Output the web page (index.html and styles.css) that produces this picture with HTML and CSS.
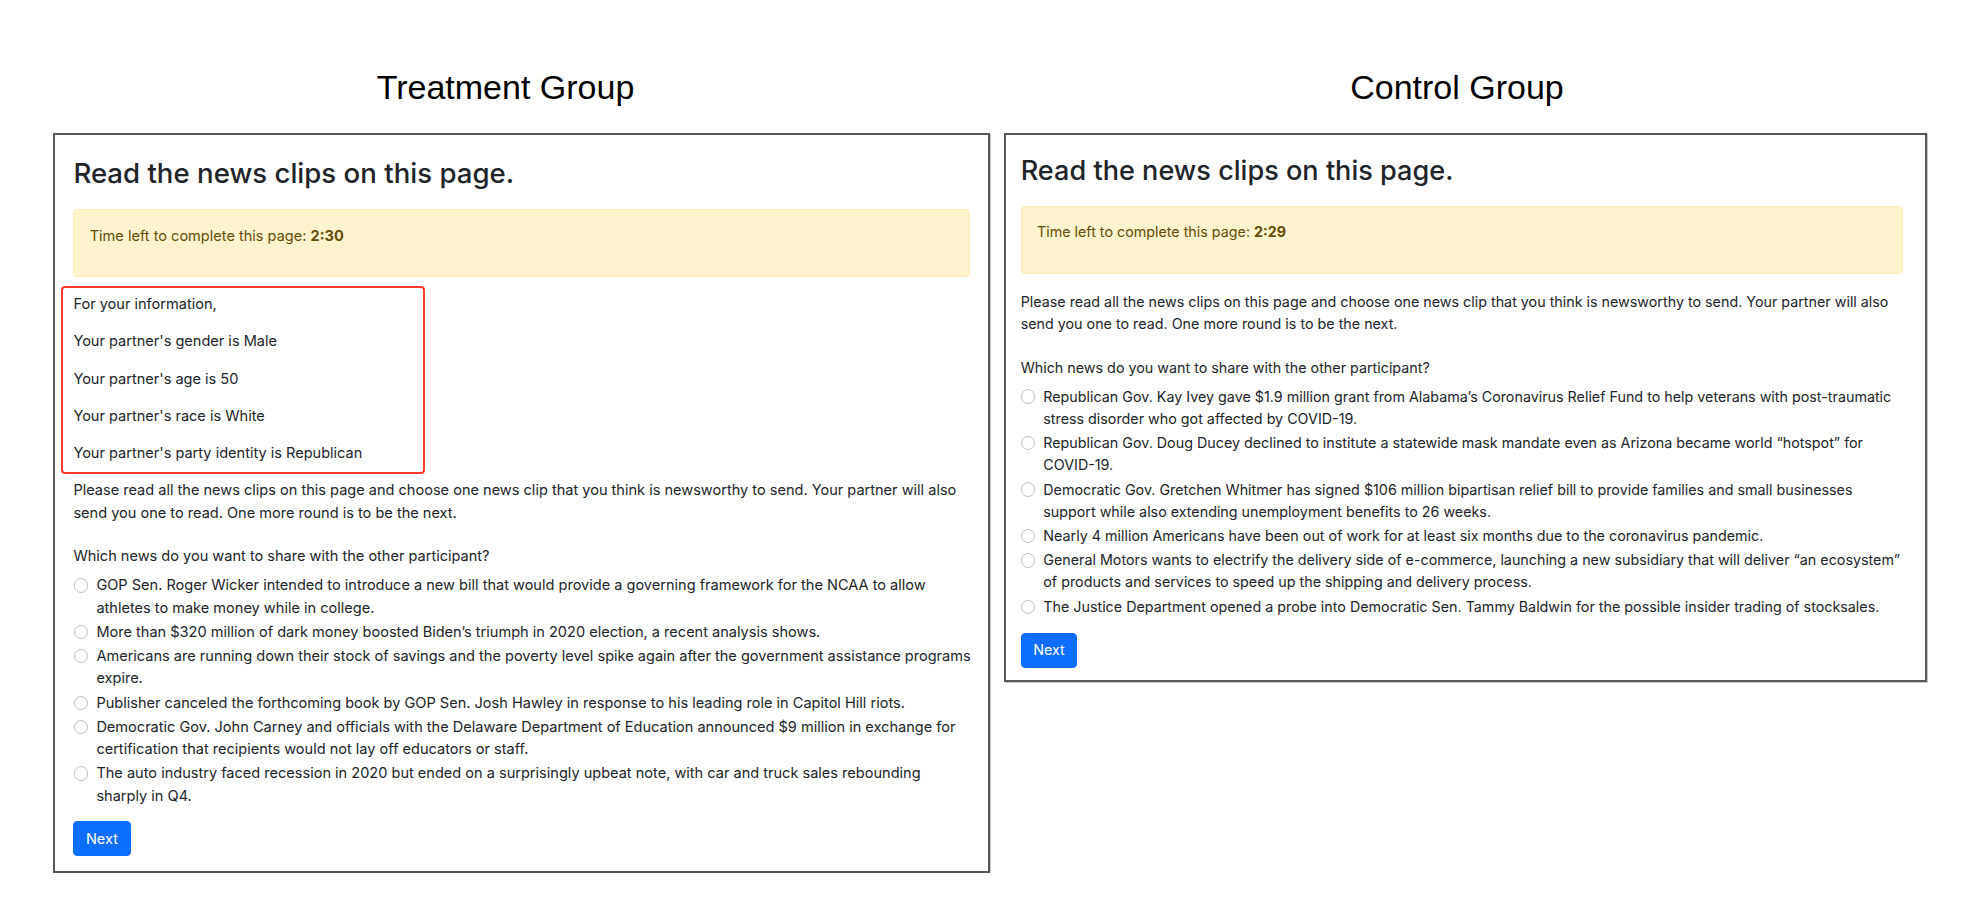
FILE: index.html
```html
<!DOCTYPE html>
<html lang="en">
<head>
<meta charset="utf-8">
<title>Treatment Group / Control Group</title>
<link rel="stylesheet" href="styles.css">
</head>
<body>
<main class="page">
  <section class="column column--treatment">
    <h2 class="group-title group-title--treatment">Treatment Group</h2>
    <div class="panel panel--treatment">
      <h1 class="panel-heading">Read the news clips on this page.</h1>
      <div class="alert">
        <p>Time left to complete this page: <b>2:30</b></p>
      </div>
      <div class="info">
        <p>For your information,</p>
        <p>Your partner's gender is Male</p>
        <p>Your partner's age is 50</p>
        <p>Your partner's race is White</p>
        <p>Your partner's party identity is Republican</p>
      </div>
      <p class="intro">Please read all the news clips on this page and choose one news clip that you think is newsworthy to send. Your partner will also<br>send you one to read. One more round is to be the next.</p>
      <p class="question">Which news do you want to share with the other participant?</p>
      <div class="options">
        <label class="option"><input class="radio" type="radio" name="t"><span class="option-text">GOP Sen. Roger Wicker intended to introduce a new bill that would provide a governing framework for the NCAA to allow<br>athletes to make money while in college.</span></label>
        <label class="option"><input class="radio" type="radio" name="t"><span class="option-text">More than $320 million of dark money boosted Biden’s triumph in 2020 election, a recent analysis shows.</span></label>
        <label class="option"><input class="radio" type="radio" name="t"><span class="option-text">Americans are running down their stock of savings and the poverty level spike again after the government assistance programs<br>expire.</span></label>
        <label class="option"><input class="radio" type="radio" name="t"><span class="option-text">Publisher canceled the forthcoming book by GOP Sen. Josh Hawley in response to his leading role in Capitol Hill riots.</span></label>
        <label class="option"><input class="radio" type="radio" name="t"><span class="option-text">Democratic Gov. John Carney and officials with the Delaware Department of Education announced $9 million in exchange for<br>certification that recipients would not lay off educators or staff.</span></label>
        <label class="option"><input class="radio" type="radio" name="t"><span class="option-text">The auto industry faced recession in 2020 but ended on a surprisingly upbeat note, with car and truck sales rebounding<br>sharply in Q4.</span></label>
      </div>
      <button class="btn" type="button">Next</button>
    </div>
  </section>

  <section class="column column--control">
    <h2 class="group-title group-title--control">Control Group</h2>
    <div class="panel panel--control">
      <h1 class="panel-heading">Read the news clips on this page.</h1>
      <div class="alert">
        <p>Time left to complete this page: <b>2:29</b></p>
      </div>
      <p class="intro">Please read all the news clips on this page and choose one news clip that you think is newsworthy to send. Your partner will also<br>send you one to read. One more round is to be the next.</p>
      <p class="question">Which news do you want to share with the other participant?</p>
      <div class="options">
        <label class="option"><input class="radio" type="radio" name="c"><span class="option-text">Republican Gov. Kay Ivey gave $1.9 million grant from Alabama’s Coronavirus Relief Fund to help veterans with post-traumatic<br>stress disorder who got affected by COVID-19.</span></label>
        <label class="option"><input class="radio" type="radio" name="c"><span class="option-text">Republican Gov. Doug Ducey declined to institute a statewide mask mandate even as Arizona became world “hotspot” for<br>COVID-19.</span></label>
        <label class="option"><input class="radio" type="radio" name="c"><span class="option-text">Democratic Gov. Gretchen Whitmer has signed $106 million bipartisan relief bill to provide families and small businesses<br>support while also extending unemployment benefits to 26 weeks.</span></label>
        <label class="option"><input class="radio" type="radio" name="c"><span class="option-text">Nearly 4 million Americans have been out of work for at least six months due to the coronavirus pandemic.</span></label>
        <label class="option"><input class="radio" type="radio" name="c"><span class="option-text">General Motors wants to electrify the delivery side of e-commerce, launching a new subsidiary that will deliver “an ecosystem”<br>of products and services to speed up the shipping and delivery process.</span></label>
        <label class="option"><input class="radio" type="radio" name="c"><span class="option-text">The Justice Department opened a probe into Democratic Sen. Tammy Baldwin for the possible insider trading of stocksales.</span></label>
      </div>
      <button class="btn" type="button">Next</button>
    </div>
  </section>
</main>
</body>
</html>
```
FILE: styles.css
```css
html, body {
  margin: 0;
  padding: 0;
  background: #ffffff;
}

.page {
  display: flex;
  align-items: flex-start;
  gap: 14px;
  padding: 70px 0 0 53px;
}

.column {
  display: flex;
  flex-direction: column;
}

.column--treatment { width: 937px; }
.column--control { width: 923px; }

.group-title {
  margin: 0 0 29px;
  font-family: "Liberation Sans", Arial, sans-serif;
  font-size: 34px;
  line-height: 34px;
  font-weight: 400;
  color: #000000;
  text-align: center;
}

.group-title--treatment { padding-right: 32px; }
.group-title--control { padding-right: 17px; }

/* panels */
.panel {
  box-sizing: border-box;
  border: 2px solid #585858;
  box-shadow: 1px 1px 0 #c4c4c4;
  background: #ffffff;
  color: #212529;
  font-family: Inter, "Liberation Sans", sans-serif;
  font-size: var(--fs);
  line-height: var(--lh);
}

.panel--treatment {
  --fs: 14.55px;
  --lh: 22.6px;
  --hfs: 27.6px;
  --item-gap: 1.5px;
  padding: 22.4px 18px 15px 18.4px;
}

.panel--control {
  --fs: 14.3px;
  --lh: 22.3px;
  --hfs: 27.1px;
  --item-gap: 1.9px;
  padding: 20.2px 22.3px 12px 14.7px;
}

.panel-heading {
  margin: 0;
  font-size: var(--hfs);
  line-height: 1.2;
  font-weight: 500;
  color: #212529;
}

.panel--treatment .panel-heading { margin-bottom: 18.5px; }
.panel--control .panel-heading { margin-bottom: 18px; }

.alert {
  background: #fff3cd;
  border: 1px solid #ffecb5;
  border-radius: 4px;
  color: #664d03;
  padding: 14.6px 15.3px;
}

.alert p { margin: 0 0 14.6px; }
.alert b { font-weight: 700; }

.panel--treatment .alert { margin-bottom: 16px; }
.panel--control .alert { margin-bottom: 16.9px; }

/* partner info, outlined in red */
.info {
  position: relative;
  margin-bottom: 14.8px;
}

.info p { margin: 0 0 14.5px; }
.info p:last-child { margin-bottom: 0; }

.info::before {
  content: "";
  position: absolute;
  left: -12.4px;
  top: -7px;
  bottom: -9.7px;
  width: 364.4px;
  box-sizing: border-box;
  border: 2px solid #f63a2e;
  border-radius: 4px;
  pointer-events: none;
}

.intro {
  margin: 0;
  white-space: nowrap;
}

.panel--treatment .intro { margin-bottom: 20.8px; }
.panel--control .intro { margin-bottom: 21.3px; }

.question { margin: 0; }
.panel--treatment .question { margin-bottom: 6.4px; }
.panel--control .question { margin-bottom: 6.7px; }

.options {
  display: flex;
  flex-direction: column;
  gap: var(--item-gap);
}

.option {
  display: flex;
  align-items: flex-start;
}

.radio {
  appearance: none;
  -webkit-appearance: none;
  flex: none;
  box-sizing: border-box;
  width: 14.5px;
  height: 14.5px;
  margin: calc((var(--lh) - 14.5px) / 2) 7.9px 0 0.6px;
  border: 1px solid #c2c2c2;
  border-radius: 50%;
  background: #ffffff;
}

.panel--control .radio { margin-left: 0.3px; margin-right: 7.8px; }

.option-text { white-space: nowrap; }

.btn {
  display: block;
  box-sizing: border-box;
  padding: 5.2px 11.5px;
  border: 1px solid #0d6efd;
  border-radius: 4px;
  background: #0d6efd;
  color: #ffffff;
  font-family: Inter, "Liberation Sans", sans-serif;
  font-size: var(--fs);
  line-height: var(--lh);
}

.panel--treatment .btn { margin-top: 13.8px; }
.panel--control .btn { margin-top: 15.3px; }
```
